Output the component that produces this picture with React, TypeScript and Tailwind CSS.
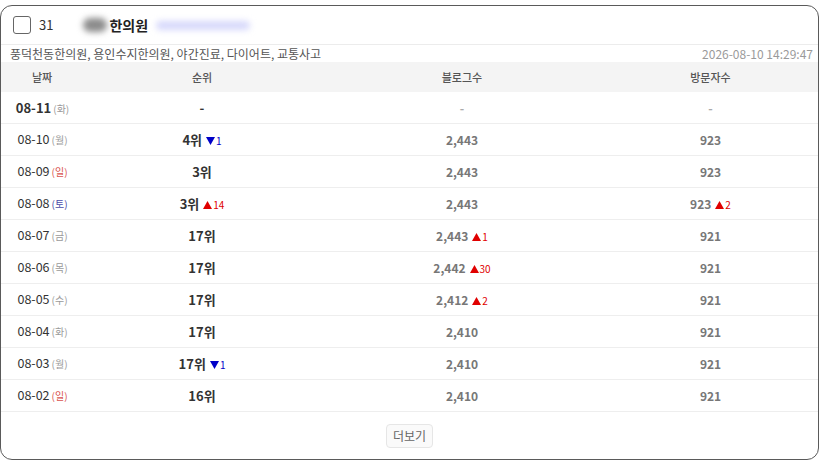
import React from "react";

type Change = { dir: "up" | "down"; n: number } | null;
type Row = {
  date: string;
  wd: string;
  wdColor: string;
  rank: string;
  rankCh: Change;
  blog: string;
  blogCh: Change;
  visit: string;
  visitCh: Change;
  first?: boolean;
};

const gray = "text-[#9a9a9a]";
const red = "text-[#d9534f]";
const blue = "text-[#4a4aa8]";

const rows: Row[] = [
  { date: "08-11", wd: "화", wdColor: gray, rank: "-", rankCh: null, blog: "-", blogCh: null, visit: "-", visitCh: null, first: true },
  { date: "08-10", wd: "월", wdColor: gray, rank: "4위", rankCh: { dir: "down", n: 1 }, blog: "2,443", blogCh: null, visit: "923", visitCh: null },
  { date: "08-09", wd: "일", wdColor: red, rank: "3위", rankCh: null, blog: "2,443", blogCh: null, visit: "923", visitCh: null },
  { date: "08-08", wd: "토", wdColor: blue, rank: "3위", rankCh: { dir: "up", n: 14 }, blog: "2,443", blogCh: null, visit: "923", visitCh: { dir: "up", n: 2 } },
  { date: "08-07", wd: "금", wdColor: gray, rank: "17위", rankCh: null, blog: "2,443", blogCh: { dir: "up", n: 1 }, visit: "921", visitCh: null },
  { date: "08-06", wd: "목", wdColor: gray, rank: "17위", rankCh: null, blog: "2,442", blogCh: { dir: "up", n: 30 }, visit: "921", visitCh: null },
  { date: "08-05", wd: "수", wdColor: gray, rank: "17위", rankCh: null, blog: "2,412", blogCh: { dir: "up", n: 2 }, visit: "921", visitCh: null },
  { date: "08-04", wd: "화", wdColor: gray, rank: "17위", rankCh: null, blog: "2,410", blogCh: null, visit: "921", visitCh: null },
  { date: "08-03", wd: "월", wdColor: gray, rank: "17위", rankCh: { dir: "down", n: 1 }, blog: "2,410", blogCh: null, visit: "921", visitCh: null },
  { date: "08-02", wd: "일", wdColor: red, rank: "16위", rankCh: null, blog: "2,410", blogCh: null, visit: "921", visitCh: null },
];

function ChangeMark({ ch }: { ch: Change }) {
  if (!ch) return null;
  const up = ch.dir === "up";
  return (
    <span className={`ml-[4px] inline-flex items-center text-[10px] font-normal leading-none ${up ? "text-[#e00000]" : "text-[#0000c8]"}`}>
      <svg width="9" height="8" viewBox="0 0 9 8" className="mr-[1px] mt-[2px]">
        {up ? <polygon points="4.5,0 9,8 0,8" fill="#e00000" /> : <polygon points="0,0 9,0 4.5,8" fill="#0000c8" />}
      </svg>
      <span className="mt-[3px]">{ch.n}</span>
    </span>
  );
}

export default function App() {
  const cols = "grid grid-cols-[82px_238px_282px_1fr]";
  return (
    <div className="w-[823px] h-[464px] bg-white pt-[5px] font-['Noto_Sans_CJK_KR','Noto_Sans',sans-serif]">
      <div className="w-[819px] h-[455px] border border-[#5a5a5a] rounded-[12px] overflow-hidden flex flex-col">
        {/* header */}
        <div className="h-[38px] flex items-center pl-[12px] border-b border-[#ececec] box-content">
          <div className="w-[18px] h-[18px] border border-[#666] rounded-[3px] bg-white" />
          <span className="ml-[8px] text-[13px] text-[#333]">31</span>
          <span className="ml-[30px] w-[24px] h-[14px] rounded-full bg-[#8c8c8c] blur-[3px]" />
          <span className="ml-[2px] text-[14px] font-bold text-[#222]">한의원</span>
          <span className="ml-[8px] w-[94px] h-[9px] rounded-full bg-[#d6d8fb] blur-[3px]" />
        </div>
        {/* subtitle */}
        <div className="h-[17px] flex items-center justify-between pl-[9px] pr-[5px] text-[12px] leading-none">
          <span className="text-[#555]">풍덕천동한의원, 용인수지한의원, 야간진료, 다이어트, 교통사고</span>
          <span className="text-[#9a9a9a]">2026-08-10 14:29:47</span>
        </div>
        {/* table header */}
        <div className={`${cols} h-[30px] bg-[#f4f4f4] items-center text-[11px] font-medium text-[#555]`}>
          <div className="text-center">날짜</div>
          <div className="text-center">순위</div>
          <div className="text-center">블로그수</div>
          <div className="text-center">방문자수</div>
        </div>
        {rows.map((r, i) => (
          <div key={i} className={`${cols} h-[32px] items-center border-b border-[#eeeeee]`}>
            <div className="flex justify-center items-baseline whitespace-nowrap leading-none pl-[1px]">
              <span className={r.first ? "text-[13px] font-bold text-[#333]" : "text-[12.5px] text-[#333]"}>{r.date}</span>
              <span className={`ml-[2px] text-[10px] ${r.wdColor}`}>({r.wd})</span>
            </div>
            <div className="flex justify-center items-center">
              <span className="text-[13px] font-bold text-[#333]">{r.rank}</span>
              <ChangeMark ch={r.rankCh} />
            </div>
            <div className="flex justify-center items-center">
              <span className={`text-[12px] font-bold ${r.blog === "-" ? "text-[#aaa]" : "text-[#777]"}`}>{r.blog}</span>
              <ChangeMark ch={r.blogCh} />
            </div>
            <div className="flex justify-center items-center">
              <span className={`text-[12px] font-bold ${r.visit === "-" ? "text-[#aaa]" : "text-[#777]"}`}>{r.visit}</span>
              <ChangeMark ch={r.visitCh} />
            </div>
          </div>
        ))}
        <div className="flex-1 flex items-center justify-center">
          <button className="h-[24px] px-[6px] border border-[#e6e6e6] rounded-[4px] bg-[#fafafa] text-[12px] text-[#666]">더보기</button>
        </div>
      </div>
    </div>
  );
}
